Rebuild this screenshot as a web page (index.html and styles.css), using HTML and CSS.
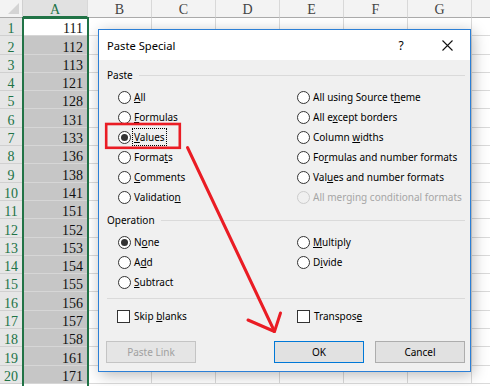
FILE: index.html
```html
<!DOCTYPE html>
<html>
<head>
<meta charset="utf-8">
<link rel="stylesheet" href="styles.css">
</head>
<body>
<div class="screen">
  <div class="sheet">
    <div class="corner"></div>
    <div class="ch sel-h">A</div><div class="ch">B</div><div class="ch">C</div><div class="ch">D</div><div class="ch">E</div><div class="ch">F</div><div class="ch">G</div><div class="ch"></div>

    <div class="rh">1</div><div class="a active">111</div><div class="c"></div><div class="c"></div><div class="c"></div><div class="c"></div><div class="c"></div><div class="c"></div><div class="c"></div>
    <div class="rh">2</div><div class="a">112</div><div class="c"></div><div class="c"></div><div class="c"></div><div class="c"></div><div class="c"></div><div class="c"></div><div class="c"></div>
    <div class="rh">3</div><div class="a">113</div><div class="c"></div><div class="c"></div><div class="c"></div><div class="c"></div><div class="c"></div><div class="c"></div><div class="c"></div>
    <div class="rh">4</div><div class="a">121</div><div class="c"></div><div class="c"></div><div class="c"></div><div class="c"></div><div class="c"></div><div class="c"></div><div class="c"></div>
    <div class="rh">5</div><div class="a">128</div><div class="c"></div><div class="c"></div><div class="c"></div><div class="c"></div><div class="c"></div><div class="c"></div><div class="c"></div>
    <div class="rh">6</div><div class="a">131</div><div class="c"></div><div class="c"></div><div class="c"></div><div class="c"></div><div class="c"></div><div class="c"></div><div class="c"></div>
    <div class="rh">7</div><div class="a">133</div><div class="c"></div><div class="c"></div><div class="c"></div><div class="c"></div><div class="c"></div><div class="c"></div><div class="c"></div>
    <div class="rh">8</div><div class="a">136</div><div class="c"></div><div class="c"></div><div class="c"></div><div class="c"></div><div class="c"></div><div class="c"></div><div class="c"></div>
    <div class="rh">9</div><div class="a">138</div><div class="c"></div><div class="c"></div><div class="c"></div><div class="c"></div><div class="c"></div><div class="c"></div><div class="c"></div>
    <div class="rh">10</div><div class="a">141</div><div class="c"></div><div class="c"></div><div class="c"></div><div class="c"></div><div class="c"></div><div class="c"></div><div class="c"></div>
    <div class="rh">11</div><div class="a">151</div><div class="c"></div><div class="c"></div><div class="c"></div><div class="c"></div><div class="c"></div><div class="c"></div><div class="c"></div>
    <div class="rh">12</div><div class="a">152</div><div class="c"></div><div class="c"></div><div class="c"></div><div class="c"></div><div class="c"></div><div class="c"></div><div class="c"></div>
    <div class="rh">13</div><div class="a">153</div><div class="c"></div><div class="c"></div><div class="c"></div><div class="c"></div><div class="c"></div><div class="c"></div><div class="c"></div>
    <div class="rh">14</div><div class="a">154</div><div class="c"></div><div class="c"></div><div class="c"></div><div class="c"></div><div class="c"></div><div class="c"></div><div class="c"></div>
    <div class="rh">15</div><div class="a">155</div><div class="c"></div><div class="c"></div><div class="c"></div><div class="c"></div><div class="c"></div><div class="c"></div><div class="c"></div>
    <div class="rh">16</div><div class="a">156</div><div class="c"></div><div class="c"></div><div class="c"></div><div class="c"></div><div class="c"></div><div class="c"></div><div class="c"></div>
    <div class="rh">17</div><div class="a">157</div><div class="c"></div><div class="c"></div><div class="c"></div><div class="c"></div><div class="c"></div><div class="c"></div><div class="c"></div>
    <div class="rh">18</div><div class="a">158</div><div class="c"></div><div class="c"></div><div class="c"></div><div class="c"></div><div class="c"></div><div class="c"></div><div class="c"></div>
    <div class="rh">19</div><div class="a">161</div><div class="c"></div><div class="c"></div><div class="c"></div><div class="c"></div><div class="c"></div><div class="c"></div><div class="c"></div>
    <div class="rh">20</div><div class="a">171</div><div class="c"></div><div class="c"></div><div class="c"></div><div class="c"></div><div class="c"></div><div class="c"></div><div class="c"></div>

    <div class="selection"></div>
  </div>

  <div class="dialog">
    <div class="titlebar">
      <span class="title">Paste Special</span>
      <span class="tbtn help">?</span>
      <span class="tbtn close"><svg width="11" height="11" viewBox="0 0 11 11"><path d="M0.5 0.5 L10.5 10.5 M10.5 0.5 L0.5 10.5" stroke="#111" stroke-width="1.1" fill="none"/></svg></span>
    </div>
    <div class="body">
      <div class="group"><span>Paste</span></div>
      <div class="options">
        <label class="opt"><span class="radio"></span><span><u>A</u>ll</span></label>
        <label class="opt"><span class="radio"></span><span>All using Source t<u>h</u>eme</span></label>
        <label class="opt"><span class="radio"></span><span><u>F</u>ormulas</span></label>
        <label class="opt"><span class="radio"></span><span>All e<u>x</u>cept borders</span></label>
        <label class="opt"><span class="radio checked"></span><span class="focus"><u>V</u>alues</span></label>
        <label class="opt"><span class="radio"></span><span>Column <u>w</u>idths</span></label>
        <label class="opt"><span class="radio"></span><span>Forma<u>t</u>s</span></label>
        <label class="opt"><span class="radio"></span><span>Fo<u>r</u>mulas and number formats</span></label>
        <label class="opt"><span class="radio"></span><span><u>C</u>omments</span></label>
        <label class="opt"><span class="radio"></span><span>Val<u>u</u>es and number formats</span></label>
        <label class="opt"><span class="radio"></span><span>Validatio<u>n</u></span></label>
        <label class="opt disabled"><span class="radio"></span><span>All merging conditional formats</span></label>
      </div>
      <div class="group op-group"><span>Operation</span></div>
      <div class="options">
        <label class="opt"><span class="radio checked"></span><span>N<u>o</u>ne</span></label>
        <label class="opt"><span class="radio"></span><span><u>M</u>ultiply</span></label>
        <label class="opt"><span class="radio"></span><span>A<u>d</u>d</span></label>
        <label class="opt"><span class="radio"></span><span>D<u>i</u>vide</span></label>
        <label class="opt"><span class="radio"></span><span><u>S</u>ubtract</span></label>
      </div>
      <div class="sep"></div>
      <div class="checks">
        <label class="chk"><span class="box"></span><span>Skip <u>b</u>lanks</span></label>
        <label class="chk"><span class="box"></span><span>Transpos<u>e</u></span></label>
      </div>
      <div class="buttons">
        <span class="btn disabled">Paste Link</span>
        <span class="btn default">OK</span>
        <span class="btn">Cancel</span>
      </div>
    </div>
  </div>

  <svg class="annot" width="490" height="386" viewBox="0 0 490 386">
    <rect x="106.2" y="124" width="73.6" height="23.8" fill="none" stroke="#ea1c24" stroke-width="2.6"/>
    <path d="M187.5 147.5 L274.5 331.5" stroke="#ea1c24" stroke-width="3" fill="none" stroke-linecap="round"/>
    <path d="M248 320 L274.5 331.5 L280.5 313" stroke="#ea1c24" stroke-width="3" fill="none" stroke-linecap="round" stroke-linejoin="round"/>
  </svg>
</div>
</body>
</html>
```

FILE: styles.css
```css
html, body {
  margin: 0;
  padding: 0;
  background: #ffffff;
}

.screen {
  position: relative;
  width: 490px;
  height: 386px;
  overflow: hidden;
}

/* ---------- spreadsheet ---------- */
.sheet {
  position: relative;
  display: grid;
  grid-template-columns: 23px 65px repeat(6, 64px) 30px;
  grid-template-rows: 18px repeat(20, 18.3px);
  font-family: "Liberation Serif", "Times New Roman", serif;
  font-size: 14px;
  color: #222;
}

.sheet > div {
  box-sizing: border-box;
}

.corner {
  position: relative;
  background: #f3f3f3;
  border-right: 1px solid #d0d0d0;
  border-bottom: 1px solid #ababab;
}

.corner::after {
  content: "";
  position: absolute;
  right: 3px;
  bottom: 3px;
  width: 11px;
  height: 11px;
  background: #d4d4d4;
  clip-path: polygon(100% 0, 100% 100%, 0 100%);
}

.ch {
  background: #f3f3f3;
  border-right: 1px solid #d8d8d8;
  border-bottom: 1px solid #ababab;
  text-align: center;
  line-height: 19px;
  color: #444;
}

.ch.sel-h {
  background: #e1e1e1;
  color: #217346;
  border-bottom: 2px solid #217346;
}

.rh {
  background: #e6e6e6;
  border-right: 1px solid #ababab;
  border-bottom: 1px solid #d0d0d0;
  color: #217346;
  display: flex;
  align-items: flex-end;
  justify-content: center;
  line-height: 12px;
}

.a {
  background: #c6c6c6;
  border-bottom: 1px solid #d6d6d6;
  display: flex;
  align-items: flex-end;
  justify-content: flex-end;
  padding-right: 5px;
  line-height: 12px;
  color: #111;
}

.a.active {
  background: #ffffff;
}

.c {
  border-right: 1px solid #dadada;
  border-bottom: 1px solid #dadada;
}

.selection {
  position: absolute;
  left: 22px;
  top: 17px;
  width: 67px;
  height: 372px;
  border: 2px solid #217346;
  box-sizing: border-box;
  pointer-events: none;
}

/* ---------- dialog ---------- */
.dialog {
  position: absolute;
  left: 98px;
  top: 29px;
  width: 373px;
  height: 343px;
  box-sizing: border-box;
  border: 1px solid #2b7fd6;
  background: #f0f0f0;
  box-shadow: 2px 3px 14px rgba(0, 0, 0, 0.28);
  font-family: "Noto Sans", "Open Sans", sans-serif;
  font-size: 10px;
  color: #000;
}

.titlebar {
  height: 30px;
  background: #ffffff;
  display: flex;
  align-items: center;
}

.title {
  flex: 1;
  padding-left: 8px;
  font-size: 11.2px;
  color: #000;
}

.tbtn {
  width: 46px;
  height: 30px;
  display: flex;
  align-items: center;
  justify-content: center;
}

.help {
  font-size: 12px;
}

.body {
  padding: 7px 5px 0 8px;
}

.group {
  display: flex;
  align-items: center;
  height: 16px;
  line-height: 16px;
}

.group::after {
  content: "";
  flex: 1;
  height: 1px;
  background: #dadada;
  margin-left: 6px;
}

.op-group {
  margin-top: 5px;
}

.options {
  margin-top: 4px;
  padding-left: 11px;
  display: grid;
  grid-template-columns: 179px 1fr;
  grid-auto-rows: 20px;
}

.opt {
  display: flex;
  align-items: center;
  white-space: nowrap;
}

.radio {
  width: 13px;
  height: 13px;
  box-sizing: border-box;
  border: 1px solid #333;
  border-radius: 50%;
  background: #fff;
  margin-right: 3px;
  display: flex;
  align-items: center;
  justify-content: center;
  flex: none;
}

.radio.checked::after {
  content: "";
  width: 7px;
  height: 7px;
  border-radius: 50%;
  background: #333;
}

.opt.disabled {
  color: #a6a6a6;
}

.opt.disabled .radio {
  border-color: #cccccc;
  background: #f0f0f0;
}

.focus {
  outline: 1px dotted #000;
  outline-offset: 1px;
}

u {
  text-underline-offset: 1px;
}

.sep {
  height: 1px;
  background: #dadada;
  margin-top: 6px;
}

.checks {
  margin-top: 7px;
  padding-left: 10px;
  display: grid;
  grid-template-columns: 180px 1fr;
  height: 20px;
}

.chk {
  display: flex;
  align-items: center;
}

.box {
  width: 13px;
  height: 13px;
  box-sizing: border-box;
  border: 1px solid #333;
  background: #fff;
  margin-right: 4px;
}

.buttons {
  margin-top: 15px;
  margin-left: -1px;
  display: flex;
  gap: 11px;
}

.btn {
  width: 90px;
  height: 22px;
  box-sizing: border-box;
  border: 1px solid #adadad;
  background: #e1e1e1;
  display: flex;
  align-items: center;
  justify-content: center;
}

.btn.disabled {
  color: #a0a0a0;
  border-color: #c4c4c4;
  background: #e5e5e5;
  margin-right: auto;
}

.btn.default {
  border-color: #0078d7;
}

.annot {
  position: absolute;
  left: 0;
  top: 0;
  pointer-events: none;
}
```
